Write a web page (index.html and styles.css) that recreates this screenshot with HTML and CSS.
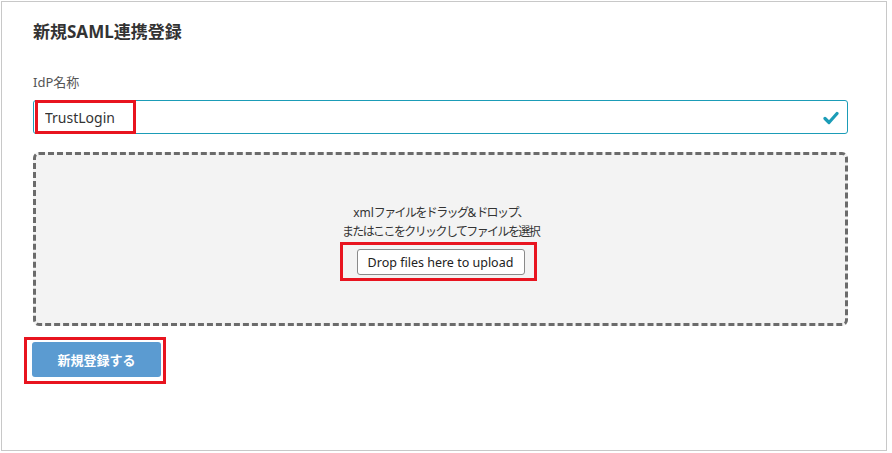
FILE: index.html
```html
<!DOCTYPE html>
<html lang="ja">
<head>
<meta charset="utf-8">
<title>新規SAML連携登録</title>
<link rel="stylesheet" href="styles.css">
</head>
<body>
<div class="frame">
  <h1 class="title">新規SAML連携登録</h1>
  <label class="label" for="idp">IdP名称</label>
  <div class="field">
    <input id="idp" class="input" type="text" value="TrustLogin">
    <svg class="check" width="16" height="14" viewBox="0 0 16 14"><path d="M2 7.5 L6 11.5 L14 2.5" fill="none" stroke="#1b9cb7" stroke-width="3.2" stroke-linecap="round" stroke-linejoin="round"/></svg>
    <span class="mark mark-input"></span>
  </div>
  <div class="dropzone">
    <p class="drop-text"><span class="latin">xml</span>ファイルをドラッグ<span class="latin">&amp;</span>ドロップ、<br>またはここをクリックしてファイルを選択</p>
    <div class="drop-btn-wrap">
      <button class="drop-btn" type="button">Drop files here to upload</button>
      <span class="mark mark-drop"></span>
    </div>
  </div>
  <div class="submit-wrap">
    <button class="submit" type="button">新規登録する</button>
    <span class="mark mark-submit"></span>
  </div>
</div>
</body>
</html>
```
FILE: styles.css
```css
html, body {
  margin: 0;
  padding: 0;
  background: #ffffff;
}
body {
  font-family: "Noto Sans", "Noto Sans CJK JP", sans-serif;
  color: #333;
}
.frame {
  margin: 1px 0 0 1px;
  border: 1px solid #c8c8c8;
  padding: 18px 0 0 31px;
  box-sizing: content-box;
  display: flex;
  flex-direction: column;
  align-items: flex-start;
  width: 853px;
  height: 430px;
}
.title {
  margin: 0;
  font-size: 17px;
  line-height: 24px;
  font-weight: 700;
  color: #333;
}
.label {
  margin-top: 29px;
  font-size: 13px;
  line-height: 18px;
  color: #555;
}
.field {
  position: relative;
  margin-top: 9px;
  width: 815px;
  height: 34px;
}
.input {
  box-sizing: border-box;
  width: 100%;
  height: 100%;
  border: 1px solid #1b9cb7;
  border-radius: 3px;
  padding: 0 40px 0 11px;
  font-family: "Noto Sans", "Noto Sans CJK JP", sans-serif;
  font-size: 14px;
  color: #333;
  background: #fff;
  outline: none;
}
.check {
  position: absolute;
  right: 9px;
  top: 11px;
}
.mark {
  position: absolute;
  border: 3px solid #e8141f;
  box-sizing: border-box;
  pointer-events: none;
}
.mark-input {
  left: 2px;
  top: 0;
  width: 101px;
  height: 34px;
}
.dropzone {
  box-sizing: border-box;
  margin-top: 18px;
  width: 815px;
  height: 174px;
  border: 3px dashed #6b6b6b;
  border-radius: 6px;
  background: #f3f3f3;
  display: flex;
  flex-direction: column;
  align-items: center;
  justify-content: center;
}
.drop-text {
  margin: 0;
  text-align: center;
  font-size: 12px;
  letter-spacing: -1.6px;
  line-height: 19px;
  color: #333;
}
.drop-text .latin {
  letter-spacing: 0;
}
.drop-btn-wrap {
  position: relative;
  margin-top: 8px;
}
.drop-btn {
  display: block;
  box-sizing: border-box;
  width: 168px;
  height: 26px;
  background: #fff;
  border: 1px solid #8a8a8a;
  border-radius: 3px;
  font-family: "Noto Sans", "Noto Sans CJK JP", sans-serif;
  font-size: 12.5px;
  color: #222;
  padding: 0;
}
.mark-drop {
  left: -17px;
  top: -7px;
  width: 197px;
  height: 39px;
}
.submit-wrap {
  position: relative;
  margin-top: 16px;
  margin-left: -1px;
}
.submit {
  display: block;
  width: 129px;
  height: 35px;
  border: none;
  border-radius: 3px;
  background: #5b9bd1;
  color: #fff;
  font-family: "Noto Sans", "Noto Sans CJK JP", sans-serif;
  font-size: 13px;
  font-weight: 700;
  padding: 0;
}
.mark-submit {
  left: -8px;
  top: -5px;
  width: 142px;
  height: 47px;
}
```
